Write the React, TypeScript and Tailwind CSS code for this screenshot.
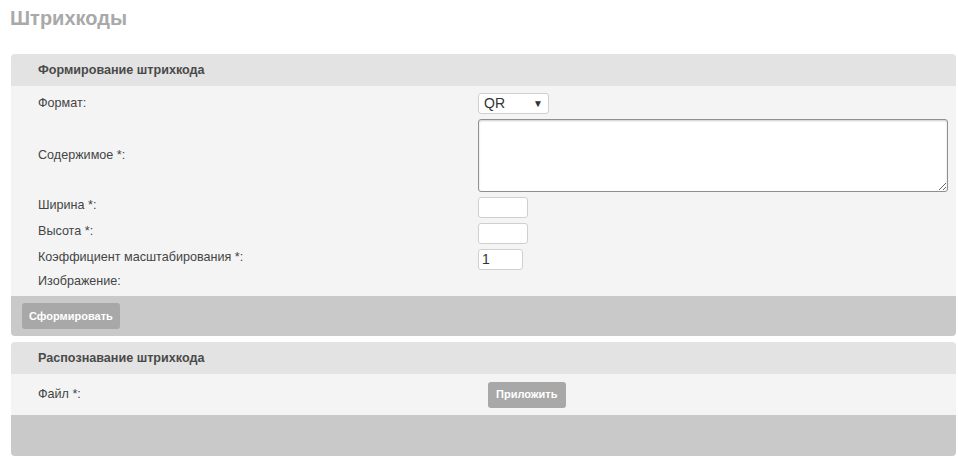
const rows = [
  { label: "Ширина *:", w: "w-[50px]", value: "" },
  { label: "Высота *:", w: "w-[50px]", value: "" },
  { label: "Коэффициент масштабирования *:", w: "w-[45px]", value: "1" },
];

export default function App() {
  return (
    <div className="min-h-[458px] bg-white font-['Liberation_Sans',Arial,sans-serif] text-[12.6px] text-[#444]">
      <h1 className="px-[10px] pt-[6px] text-[20px] font-bold text-[#a9a9a9] leading-[24px]">Штрихкоды</h1>

      <div className="ml-[11px] mr-[2px] mt-[24px]">
        {/* Формирование */}
        <section className="rounded-[4px] overflow-hidden">
          <div className="bg-[#e3e3e3] h-[32px] flex items-center pl-[27px] font-bold text-[#4a4a4a]">
            Формирование штрихкода
          </div>
          <div className="bg-[#f4f4f4] pt-[7px] pb-[6px]">
            <div className="flex items-center h-[21px]">
              <div className="w-[467px] pl-[27px]">Формат:</div>
              <div className="relative w-[71px] h-[21px] rounded-[3px] border border-[#cfcfcf] bg-white pl-[5px] flex items-center text-[14px] text-[#333]">
                QR
                <span className="absolute right-[5px] top-[5px] text-[10px] leading-none text-[#333]">▼</span>
              </div>
            </div>
            <div className="flex items-center mt-[5px]">
              <div className="w-[467px] pl-[27px]">Содержимое *:</div>
              <textarea
                className="w-[470px] h-[73px] rounded-[3px] border border-[#8f8f8f] bg-white shadow-[inset_0_1px_2px_rgba(0,0,0,0.2)] outline-none px-[2px] text-[13px]"
                defaultValue=""
              />
            </div>
            {rows.map((r) => (
              <div key={r.label} className="flex items-center mt-[5px]">
                <div className="w-[467px] pl-[27px] -translate-y-[2px]">{r.label}</div>
                <div className={`${r.w} h-[21px] rounded-[3px] border border-[#cfcfcf] bg-white flex items-center pl-[3px] text-[14px] text-[#333]`}>
                  {r.value}
                </div>
              </div>
            ))}
            <div className="flex items-center h-[18px] mt-[2px]">
              <div className="pl-[27px]">Изображение:</div>
            </div>
          </div>
          <div className="bg-[#c9c9c9] h-[40px] flex items-center pl-[11px]">
            <button className="h-[26px] px-[7px] rounded-[3px] bg-[#a8a8a8] text-white text-[11px] font-bold">
              Сформировать
            </button>
          </div>
        </section>

        {/* Распознавание */}
        <section className="rounded-[4px] overflow-hidden mt-[6px]">
          <div className="bg-[#e3e3e3] h-[32px] flex items-center pl-[27px] font-bold text-[#4a4a4a]">
            Распознавание штрихкода
          </div>
          <div className="bg-[#f4f4f4] h-[41px] flex items-center">
            <div className="w-[477px] pl-[27px]">Файл *:</div>
            <button className="h-[26px] px-[8px] rounded-[3px] bg-[#a8a8a8] text-white text-[11px] font-bold">
              Приложить
            </button>
          </div>
          <div className="bg-[#c9c9c9] h-[41px]" />
        </section>
      </div>
    </div>
  );
}
